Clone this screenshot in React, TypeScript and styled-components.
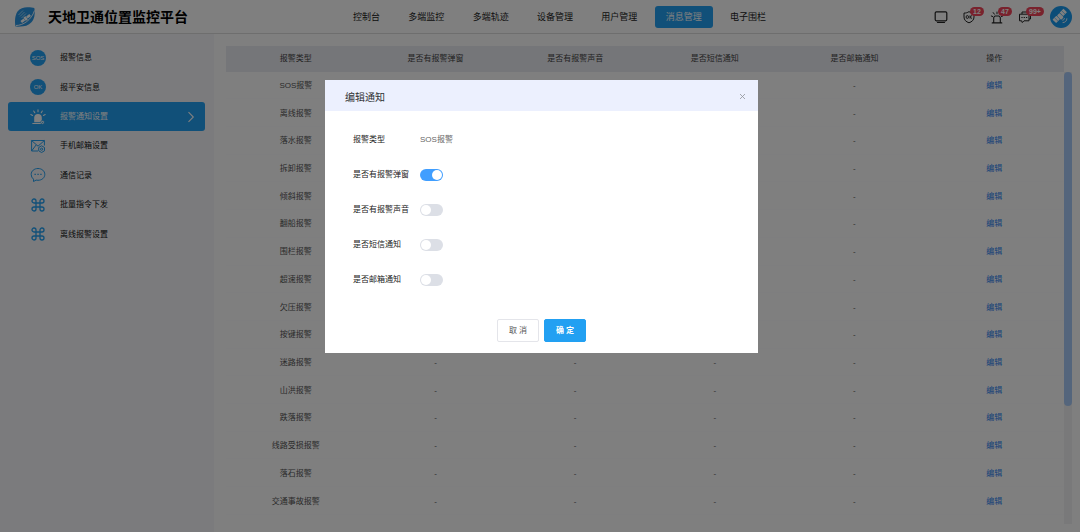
import React from "react";
import styled, { createGlobalStyle, css } from "styled-components";

const Global = createGlobalStyle`
  * { box-sizing: border-box; }
  html, body, #root { height: 100%; }
  body {
    margin: 0;
    overflow: hidden;
    background: #fff;
    font-family: "Liberation Sans", "Noto Sans CJK SC", sans-serif;
    font-size: 8px;
    line-height: 12px;
    color: #303133;
  }
  button, input { font: inherit; margin: 0; }
  a { text-decoration: none; }
`;

const Page = styled.div`
  height: 100%;
  display: flex;
  flex-direction: column;
`;

const Header = styled.header`
  flex: none;
  height: 34px;
  display: flex;
  align-items: center;
  border-bottom: 1px solid #dcdcdc;
  padding: 0 8px 0 14px;
`;

const Brand = styled.div`
  flex: none;
  width: 328px;
  display: flex;
  align-items: center;
  gap: 12px;
`;

const Title = styled.h1`
  margin: 0;
  font-size: 14px;
  line-height: 20px;
  font-weight: 700;
  color: #000;
`;

const Nav = styled.nav`
  width: 435px;
  display: flex;
  justify-content: space-between;
`;

const NavLink = styled.a<{ $active?: boolean }>`
  height: 22px;
  padding: 0 11px;
  border-radius: 3px;
  font-size: 9px;
  line-height: 22px;
  white-space: nowrap;
  color: ${(p) => (p.$active ? "#fff" : "#222")};
  background: ${(p) => (p.$active ? "#22a0f2" : "transparent")};
`;

const Tools = styled.div`
  margin-left: auto;
  display: flex;
  align-items: center;
  gap: 18px;
`;

const ToolGroup = styled.div`
  display: flex;
  gap: 14px;
`;

const ToolButton = styled.button`
  position: relative;
  display: flex;
  padding: 0;
  border: 0;
  background: none;
  color: #222;
`;

const Badge = styled.span`
  position: absolute;
  left: 8px;
  top: -3px;
  height: 9px;
  padding: 0 3px;
  border-radius: 5px;
  background: #f2455a;
  color: #fff;
  font-size: 7px;
  line-height: 9px;
  font-weight: 700;
`;

const Body = styled.div`
  flex: 1;
  min-height: 0;
  display: flex;
`;

const Sidebar = styled.aside`
  flex: none;
  width: 214px;
  padding: 9px 9px 0 8px;
  background: #f6f7fb;
`;

const Menu = styled.nav`
  height: 206px;
  display: grid;
  grid-auto-rows: 1fr;
`;

const MenuLink = styled.a<{ $active?: boolean }>`
  display: flex;
  align-items: center;
  gap: 14px;
  padding: 0 10px 0 22px;
  border-radius: 3px;
  color: #111;
  ${(p) =>
    p.$active &&
    css`
      background: #22a0f2;
      color: #fff;
    `}
`;

const MenuText = styled.span`
  flex: 1;
  padding-top: 1px;
`;

const Main = styled.main`
  flex: 1;
  min-width: 0;
  display: flex;
  align-items: flex-start;
  padding: 12px 8px 8px 12px;
`;

const TableArea = styled.div`
  flex: 1;
  min-width: 0;
`;

const Table = styled.table`
  width: 100%;
  height: 469px;
  border-collapse: collapse;
  table-layout: fixed;
  text-align: center;
`;

const Th = styled.th`
  height: 26px;
  padding: 0;
  background: #ebecf3;
  font-weight: 400;
  color: #444;
`;

const Td = styled.td`
  padding: 2px 0 0;
  border-bottom: 1px solid #fcfcfe;
  color: #555;
`;

const EditLink = styled.a`
  color: #2c82f0;
`;

const ScrollTrack = styled.div`
  flex: none;
  align-self: stretch;
  width: 8px;
  margin-top: 26px;
  background: #f3f3f4;
`;

const ScrollThumb = styled.div`
  height: 74%;
  border-radius: 4px;
  background: #a9cbf8;
`;

const Mask = styled.div`
  position: fixed;
  inset: 0;
  display: flex;
  justify-content: center;
  align-items: flex-start;
  padding: 80px 0 0 3px;
  background: rgba(0, 0, 0, 0.5);
`;

const Dialog = styled.section`
  width: 433px;
  max-width: 100%;
  background: #fff;
`;

const DialogHeader = styled.header`
  height: 31px;
  display: flex;
  align-items: center;
  justify-content: space-between;
  padding: 2px 12px 0 20px;
  background: #ecf0fe;
`;

const DialogTitle = styled.h2`
  margin: 0;
  padding-top: 2px;
  font-size: 10px;
  line-height: 16px;
  font-weight: 400;
  color: #303133;
`;

const CloseButton = styled.button`
  display: flex;
  padding: 0;
  border: 0;
  background: none;
  color: #909399;
`;

const Form = styled.form`
  padding: 17px 28px 11px;
`;

const Field = styled.div`
  display: flex;
  align-items: center;
  height: 24px;
  margin-bottom: 11px;
`;

const Label = styled.label`
  width: 67px;
  color: #222;
`;

const Value = styled.output`
  color: #666;
`;

const Switch = styled.input`
  appearance: none;
  width: 23px;
  height: 12px;
  padding: 1px;
  border-radius: 6px;
  background: #dcdfe6;
  display: flex;

  &::before {
    content: "";
    width: 10px;
    height: 10px;
    border-radius: 50%;
    background: #fff;
  }
  &:checked {
    background: #409eff;
    justify-content: flex-end;
  }
`;

const Actions = styled.div`
  display: flex;
  justify-content: center;
  gap: 5px;
  margin-top: 27px;
`;

const Button = styled.button<{ $primary?: boolean }>`
  width: 42px;
  height: 23px;
  padding: 0;
  border: 1px solid ${(p) => (p.$primary ? "#22a0f2" : "#e4e5ea")};
  border-radius: 2px;
  background: ${(p) => (p.$primary ? "#22a0f2" : "#fff")};
  color: ${(p) => (p.$primary ? "#fff" : "#555")};
  font-weight: ${(p) => (p.$primary ? 700 : 400)};
`;

const Logo = () => (
  <svg width="22" height="22" viewBox="0 0 22 22" aria-hidden="true">
    <path
      d="M1.500 20.500C.6 16 .8 9.500 3.500 5.500 6 2 10.500 1 14 1.200c2.500.1 5 .3 6.300.8.700 3 .8 8-1 11.500-2 4-6 6.500-10 6.800-2.800.3-5.800.5-7.800.2Z"
      fill="#2b97e4"
    />
    <path d="M2 19.500C9 19.500 17.500 14 20.500 4.500" stroke="#fff" strokeWidth=".9" fill="none" />
    <path d="M4.500 9l4.500-4.500M6 10.500L10.500 6M7.500 12L12 7.500" stroke="#a9d7f7" strokeWidth=".9" />
    <g transform="rotate(-38 11.500 12.500)" fill="#fff">
      <rect x="6" y="11.300" width="4" height="2.600" />
      <rect x="10.300" y="10.600" width="2.600" height="4" rx=".6" />
      <rect x="13.300" y="11.300" width="4" height="2.600" />
    </g>
  </svg>
);

const Avatar = () => (
  <svg width="22" height="22" viewBox="0 0 22 22" aria-label="用户头像">
    <circle cx="11" cy="11" r="11" fill="#189bf0" />
    <g transform="rotate(-45 10 10)" fill="#fff">
      <rect x="2.200" y="7.300" width="5.400" height="5" rx=".4" />
      <rect x="8" y="7.500" width="3.800" height="6" rx="1" />
      <rect x="12.200" y="7.300" width="5.400" height="5" rx=".4" />
      <path d="M4.900 7.300v5M14.900 7.300v5" stroke="#189bf0" strokeWidth=".5" />
    </g>
    <path
      d="M12.700 14.200c.9 0 1.700-.8 1.700-1.700M13 16.600c2.200 0 3.900-1.700 3.900-3.900"
      stroke="#fff"
      strokeWidth=".9"
      strokeLinecap="round"
      fill="none"
    />
  </svg>
);

const MonitorIcon = () => (
  <svg width="14" height="14" viewBox="0 0 14 14" fill="none" stroke="currentColor" strokeLinecap="round" strokeWidth="1.200">
    <rect x="1.200" y="1.800" width="11.600" height="9" rx="1.200" />
    <path d="M3.500 12.500h7" />
  </svg>
);

const ShieldIcon = () => (
  <svg width="14" height="14" viewBox="0 0 14 14" fill="none" stroke="currentColor" strokeLinejoin="round">
    <path d="M7 1.600C5.500 2.700 3.800 3.100 2 3.100v3.900c0 3 2.100 4.800 5 5.800 2.900-1 5-2.800 5-5.800V3.100C10.200 3.100 8.500 2.700 7 1.600Z" />
    <ellipse cx="5.300" cy="7" rx="1.200" ry="1.500" strokeWidth=".9" />
    <path d="M8 5.400v3.200M10 5.400L8.200 7 10 8.600" strokeWidth=".9" />
  </svg>
);

const AlarmIcon = () => (
  <svg width="14" height="14" viewBox="0 0 14 14" fill="none" stroke="currentColor" strokeLinecap="round" strokeLinejoin="round">
    <path d="M3.700 12.700V7.500L5 6h4l1.300 1.500v5.200M2.200 12.900h9.600" strokeWidth="1.100" />
    <path d="M7 2v1.800M3.200 2.600l1.200 1.600M10.800 2.600L9.600 4.200M1.300 6l1.400.5M12.700 6l-1.400.5" />
  </svg>
);

const ChatIcon = () => (
  <svg width="14" height="14" viewBox="0 0 14 14" fill="none" stroke="currentColor" strokeLinejoin="round">
    <path d="M4 4V2h8.500v7H11M1.500 4.200H11v6.600H6L4.300 12.600 3.600 10.800H1.500Z" />
    <path d="M3.400 7.500h1.200M5.700 7.500h1.200M8 7.500h1.200" strokeWidth="1.200" />
  </svg>
);

const Round = styled.span`
  flex: none;
  width: 16px;
  height: 16px;
  border-radius: 50%;
  background: #22a0f2;
  color: #fff;
  font-size: 6px;
  line-height: 16px;
  text-align: center;
`;

const BellLampIcon = () => (
  <svg width="16" height="16" viewBox="0 0 16 16" fill="none" stroke="#fff" strokeLinecap="round">
    <path d="M4.200 13.300V8.800a3.800 3.800 0 0 1 7.600 0v4.500Z" fill="#fff" stroke="none" />
    <path d="M2.800 14.500h8M8 .8v2M3.700 2l1.100 1.700M12.300 2l-1.100 1.700M.8 5.600l1.800.8M15.200 5.600l-1.800.8" strokeWidth="1.100" />
    <circle cx="12.600" cy="13.300" r="1.900" fill="#fff" stroke="#22a0f2" strokeWidth=".7" />
    <circle cx="12.600" cy="13.300" r=".6" fill="#22a0f2" stroke="none" />
  </svg>
);

const MailIcon = () => (
  <svg width="16" height="16" viewBox="0 0 16 16" fill="none" stroke="#22a0f2">
    <path d="M8 13H1.600V2.500h12.800v5M1.600 2.500L8 8.200l6.400-5.700M1.600 13l4.500-6" />
    <path d="M11.600 7.800l2.900 1.700v3.300l-2.900 1.700-2.900-1.700V9.500Z" />
    <circle cx="11.600" cy="11.200" r="1.100" />
  </svg>
);

const BubbleIcon = () => (
  <svg width="16" height="16" viewBox="0 0 16 16" fill="none" stroke="#22a0f2">
    <path d="M3.500 14.500v-2.300A6 6 0 0 1 1.200 7.400C1.200 4 4.200 1.500 8 1.500s6.800 2.500 6.800 5.900-3 5.900-6.800 5.900c-.7 0-1.300-.1-1.900-.2Z" strokeLinejoin="round" />
    <path d="M4.500 7.400h1.300M7.400 7.400h1.300M10.300 7.400h1.300" strokeWidth="1.300" />
  </svg>
);

const CommandIcon = () => (
  <svg width="16" height="16" viewBox="0 0 16 16" fill="none" stroke="#22a0f2" strokeWidth="1.300">
    <path d="M6 4v8a2 2 0 1 1-2-2h8a2 2 0 1 1-2 2V4a2 2 0 1 1 2 2H4a2 2 0 1 1 2-2Z" />
  </svg>
);

const Chevron = () => (
  <svg width="8" height="12" viewBox="0 0 8 12" fill="none" stroke="#fff" strokeWidth="1.100">
    <path d="M1.500 1.200L6.300 6l-4.800 4.800" />
  </svg>
);

const CloseIcon = () => (
  <svg width="7" height="7" viewBox="0 0 7 7" stroke="currentColor" strokeWidth=".8">
    <path d="M1 1l5 5M6 1L1 6" />
  </svg>
);

const navItems = ["控制台", "多端监控", "多端轨迹", "设备管理", "用户管理", "消息管理", "电子围栏"];

const menuItems = [
  { text: "报警信息", icon: <Round>SOS</Round> },
  { text: "报平安信息", icon: <Round>OK</Round> },
  { text: "报警通知设置", icon: <BellLampIcon />, active: true },
  { text: "手机邮箱设置", icon: <MailIcon /> },
  { text: "通信记录", icon: <BubbleIcon /> },
  { text: "批量指令下发", icon: <CommandIcon /> },
  { text: "离线报警设置", icon: <CommandIcon /> },
];

const columns = ["报警类型", "是否有报警弹窗", "是否有报警声音", "是否短信通知", "是否邮箱通知", "操作"];

const alarmTypes = [
  "SOS报警", "离线报警", "落水报警", "拆卸报警", "倾斜报警", "翻船报警", "围栏报警", "超速报警",
  "欠压报警", "按键报警", "迷路报警", "山洪报警", "跌落报警", "线路受损报警", "落石报警", "交通事故报警",
];

const switches = [
  { id: "popup", text: "是否有报警弹窗", on: true },
  { id: "sound", text: "是否有报警声音", on: false },
  { id: "sms", text: "是否短信通知", on: false },
  { id: "mail", text: "是否邮箱通知", on: false },
];

export default function App() {
  return (
    <>
      <Global />
      <Page>
        <Header>
          <Brand>
            <Logo />
            <Title>天地卫通位置监控平台</Title>
          </Brand>
          <Nav>
            {navItems.map((text) => (
              <NavLink key={text} href="#" $active={text === "消息管理"}>{text}</NavLink>
            ))}
          </Nav>
          <Tools>
            <ToolGroup>
              <ToolButton aria-label="大屏"><MonitorIcon /></ToolButton>
              <ToolButton aria-label="平安"><ShieldIcon /><Badge>12</Badge></ToolButton>
              <ToolButton aria-label="报警"><AlarmIcon /><Badge>47</Badge></ToolButton>
              <ToolButton aria-label="消息"><ChatIcon /><Badge>99+</Badge></ToolButton>
            </ToolGroup>
            <Avatar />
          </Tools>
        </Header>
        <Body>
          <Sidebar>
            <Menu>
              {menuItems.map((item) => (
                <MenuLink key={item.text} href="#" $active={item.active}>
                  {item.icon}
                  <MenuText>{item.text}</MenuText>
                  {item.active && <Chevron />}
                </MenuLink>
              ))}
            </Menu>
          </Sidebar>
          <Main>
            <TableArea>
              <Table>
                <thead>
                  <tr>{columns.map((c) => <Th key={c} scope="col">{c}</Th>)}</tr>
                </thead>
                <tbody>
                  {alarmTypes.map((type) => (
                    <tr key={type}>
                      <Td>{type}</Td>
                      <Td>-</Td>
                      <Td>-</Td>
                      <Td>-</Td>
                      <Td>-</Td>
                      <Td><EditLink href="#">编辑</EditLink></Td>
                    </tr>
                  ))}
                </tbody>
              </Table>
            </TableArea>
            <ScrollTrack><ScrollThumb /></ScrollTrack>
          </Main>
        </Body>
      </Page>
      <Mask>
        <Dialog role="dialog" aria-labelledby="dialog-title">
          <DialogHeader>
            <DialogTitle id="dialog-title">编辑通知</DialogTitle>
            <CloseButton aria-label="关闭"><CloseIcon /></CloseButton>
          </DialogHeader>
          <Form>
            <Field>
              <Label htmlFor="type">报警类型</Label>
              <Value id="type">SOS报警</Value>
            </Field>
            {switches.map((s) => (
              <Field key={s.id}>
                <Label htmlFor={s.id}>{s.text}</Label>
                <Switch id={s.id} type="checkbox" role="switch" defaultChecked={s.on} />
              </Field>
            ))}
            <Actions>
              <Button type="button">取 消</Button>
              <Button type="button" $primary>确 定</Button>
            </Actions>
          </Form>
        </Dialog>
      </Mask>
    </>
  );
}
